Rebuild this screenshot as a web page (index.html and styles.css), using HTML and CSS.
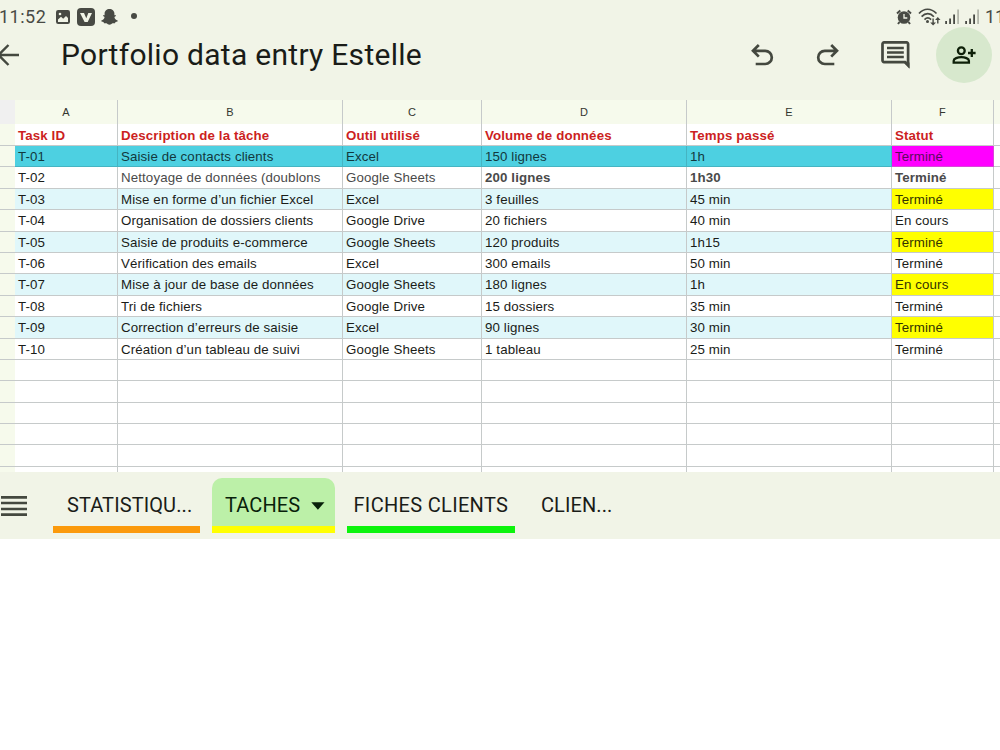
FILE: index.html
```
<!DOCTYPE html>
<html lang="fr">
<head>
    <title>Portfolio data entry Estelle</title>
    <meta charset="utf-8">
    <link rel="stylesheet" href="styles.css">
</head>
<body>
<div class="status">
    <span class="clock">11:52</span>
    <svg class="photo" width="14" height="14" viewBox="0 0 14 14"><rect width="14" height="14" rx="2.2" fill="#484a44"/><path d="M2 12V9.500l3-2.700 2.200 2L10 6l2 2v4z" fill="#f1f4e7"/><circle cx="4" cy="4" r="1.300" fill="#f1f4e7"/></svg>
    <svg class="vapp" width="18" height="18" viewBox="0 0 18 18"><rect width="18" height="18" rx="4" fill="#484a44"/><path d="M3 5h4l2.300 5.200L11.300 5H15l-4.300 9H7.600z" fill="#f1f4e7"/></svg>
    <svg class="ghost" width="17" height="16" viewBox="0 0 17 16"><path d="M8.500 0C5.800 0 3.600 1.800 3.600 4.500v1.700L2.400 6.100 2.100 7l1.500 1C3.300 9.800 2.200 11 .3 11.600L.5 12.500l2 .6.500 1.200 2.500-.1c1 .6 1.800 1.500 3 1.500s2-.9 3-1.500l2.500.1.500-1.200 2-.6.200-.9C14.800 11 13.700 9.800 13.400 8l1.500-1-.3-.9-1.200.1V4.500C13.400 1.800 11.200 0 8.500 0z" fill="#484a44"/></svg>
    <span class="dot"></span>
    <svg class="alarm" width="16" height="16" viewBox="0 0 16 16"><circle cx="8" cy="8.500" r="6.300" fill="#484a44"/><path d="M1 4.500 4.300 1.500M15 4.500 11.700 1.500M3.500 13l-1.500 2M12.500 13l1.500 2" stroke="#484a44" stroke-width="2"/><path d="M8 5v4h3.300" fill="none" stroke="#f1f4e7" stroke-width="1.300"/></svg>
    <svg class="wifi" width="23" height="18" viewBox="0 0 23 18"><g fill="none" stroke="#484a44" stroke-width="1.700"><path d="M1 5.500C6-.2 13-.2 18.500 5.500"/><path d="M3.600 8.700c3.700-4 8.700-4 12.300 0"/><path d="M6.500 11.600c2-2 4.600-2 6.600 0"/></g><circle cx="9.500" cy="13.600" r="1.500" fill="#484a44"/><path d="M14.400 10.500h1.400v4H18l-2.900 3-2.900-3h2.200zM19.100 15.500h1.400v-3.500h2L19.800 9l-2.700 3h2z" fill="#484a44"/></svg>
    <svg class="signal" width="14" height="15" viewBox="0 0 14 15"><path d="M.2 12h1.800v3H.2zM4.200 9.500H6V15H4.200zM8.200 5.500H10V15H8.200z" fill="#484a44"/><path d="M12.200.500H14V15h-1.800z" fill="#b4b7ac"/></svg>
    <svg class="signal signal-2" width="14" height="15" viewBox="0 0 14 15"><path d="M.2 12h1.800v3H.2zM4.200 9.500H6V15H4.200zM8.200 5.500H10V15H8.200z" fill="#484a44"/><path d="M12.200.500H14V15h-1.800z" fill="#b4b7ac"/></svg>
    <span class="battery">11</span>
</div>

<div class="appbar">
    <svg class="back" width="20" height="24" viewBox="0 0 20 24"><path d="M19 12H-1M8.500 2-1.500 12l10 10" fill="none" stroke="#44483f" stroke-width="2.400"/></svg>
    <h1>Portfolio data entry Estelle</h1>
    <svg class="undo" width="24" height="24" viewBox="0 0 24 24"><path d="M8.800 2 3 7.800l5.800 5.800M3 7.800h12.200a6.600 6.600 0 0 1 0 13.200H5.700" fill="none" stroke="#44483f" stroke-width="2.700"/></svg>
    <svg class="redo" width="24" height="24" viewBox="0 0 24 24"><path d="M15.200 2 21 7.800l-5.800 5.800M21 7.800H8.800a6.600 6.600 0 0 0 0 13.200h9.500" fill="none" stroke="#44483f" stroke-width="2.700"/></svg>
    <svg class="comment" width="29" height="28" viewBox="0 0 29 28"><path d="M3 1.400h22.600a1.500 1.500 0 0 1 1.500 1.500V24l-3-2.900H3a1.500 1.500 0 0 1-1.500-1.500V2.900A1.500 1.500 0 0 1 3 1.400z" fill="none" stroke="#44483f" stroke-width="2.700"/><path d="M22.500 21.500h6v6.200z" fill="#44483f"/><path d="M6 6.900h16.800M6 11.500h16.800M6 16.100h16.800" stroke="#44483f" stroke-width="2.500"/></svg>
    <div class="share">
        <svg width="24" height="18" viewBox="0 0 24 18"><g fill="none" stroke="#0e2009" stroke-width="2.300"><circle cx="9.300" cy="4.700" r="3.400"/><path d="M1.700 16.600v-1.800c0-2.200 4-3.600 7.600-3.600s7.600 1.400 7.600 3.600v1.800z"/><path d="M19.800 3v8M16 7h7.600"/></g></svg>
    </div>
</div>

<div class="sheet">
    <div class="row letters"><i></i><b>A</b><b>B</b><b>C</b><b>D</b><b>E</b><b>F</b><b></b></div>
    <div class="row head"><i></i><b>Task ID</b><b>Description de la tâche</b><b>Outil utilisé</b><b>Volume de données</b><b>Temps passé</b><b>Statut</b><b></b></div>
    <div class="row selected"><i></i><span>T-01</span><span>Saisie de contacts clients</span><span>Excel</span><span>150 lignes</span><span>1h</span><span class="pink">Terminé</span><span></span></div>
    <div class="row"><i></i><span>T-02</span><span class="grey">Nettoyage de données (doublons</span><span class="grey">Google Sheets</span><span class="grey strong">200 lignes</span><span class="grey strong">1h30</span><span class="grey strong">Terminé</span><span></span></div>
    <div class="row band"><i></i><span>T-03</span><span>Mise en forme d’un fichier Excel</span><span>Excel</span><span>3 feuilles</span><span>45 min</span><span class="yellow">Terminé</span><span></span></div>
    <div class="row"><i></i><span>T-04</span><span>Organisation de dossiers clients</span><span>Google Drive</span><span>20 fichiers</span><span>40 min</span><span>En cours</span><span></span></div>
    <div class="row band"><i></i><span>T-05</span><span>Saisie de produits e-commerce</span><span>Google Sheets</span><span>120 produits</span><span>1h15</span><span class="yellow">Terminé</span><span></span></div>
    <div class="row"><i></i><span>T-06</span><span>Vérification des emails</span><span>Excel</span><span>300 emails</span><span>50 min</span><span>Terminé</span><span></span></div>
    <div class="row band"><i></i><span>T-07</span><span>Mise à jour de base de données</span><span>Google Sheets</span><span>180 lignes</span><span>1h</span><span class="yellow">En cours</span><span></span></div>
    <div class="row"><i></i><span>T-08</span><span>Tri de fichiers</span><span>Google Drive</span><span>15 dossiers</span><span>35 min</span><span>Terminé</span><span></span></div>
    <div class="row band"><i></i><span>T-09</span><span>Correction d’erreurs de saisie</span><span>Excel</span><span>90 lignes</span><span>30 min</span><span class="yellow">Terminé</span><span></span></div>
    <div class="row"><i></i><span>T-10</span><span>Création d’un tableau de suivi</span><span>Google Sheets</span><span>1 tableau</span><span>25 min</span><span>Terminé</span><span></span></div>
    <div class="row"><i></i><span></span><span></span><span></span><span></span><span></span><span></span><span></span></div>
    <div class="row"><i></i><span></span><span></span><span></span><span></span><span></span><span></span><span></span></div>
    <div class="row"><i></i><span></span><span></span><span></span><span></span><span></span><span></span><span></span></div>
    <div class="row"><i></i><span></span><span></span><span></span><span></span><span></span><span></span><span></span></div>
    <div class="row"><i></i><span></span><span></span><span></span><span></span><span></span><span></span><span></span></div>
    <div class="row"><i></i><span></span><span></span><span></span><span></span><span></span><span></span><span></span></div>
</div>

<div class="tabs">
    <svg class="menu" width="26" height="20" viewBox="0 0 26 20"><path d="M0 1.400h26M0 7h26M0 13h26M0 18.600h26" stroke="#44483f" stroke-width="2.600"/></svg>
    <div class="tab orange"><span>STATISTIQU...</span></div>
    <div class="tab active"><span>TACHES</span><svg width="14" height="8" viewBox="0 0 14 8"><path d="M.3.300h13.200L6.900 7.700z" fill="#08210a"/></svg></div>
    <div class="tab green"><span>FICHES CLIENTS</span></div>
    <div class="tab"><span>CLIEN...</span></div>
</div>
</body>
</html>
```
FILE: styles.css
```
body {
    margin: 0;
    width: 1000px;
    overflow: hidden;
    background: #fff;
    color: #1a1c18;
    font-family: Roboto, sans-serif;
}

svg {
    flex: none;
}

.status {
    display: flex;
    align-items: flex-start;
    height: 26px;
    background: #f1f4e7;
    color: #484a44;
    font-size: 18px;
    line-height: 20px;
}

.clock {
    width: 56px;
    margin-top: 7px;
    margin-left: -1px;
    letter-spacing: 0.5px;
}

.photo {
    margin: 10px 7px 0 1px;
}

.vapp {
    margin: 8px 6px 0 0;
}

.ghost {
    margin: 9px 13px 0 0;
}

.dot {
    width: 6px;
    height: 6px;
    margin-top: 13px;
    border-radius: 50%;
    background: #484a44;
}

.alarm {
    margin: 9px 6px 0 auto;
}

.wifi {
    margin: 8px 4px 0 0;
}

.signal {
    margin: 9px 6px 0 0;
}

.battery {
    width: 15px;
    margin-top: 7px;
}

.appbar {
    display: flex;
    align-items: center;
    box-sizing: border-box;
    height: 74px;
    padding: 1px 8px 18px 0;
    background: #f1f4e7;
}

.appbar h1 {
    flex: 1;
    margin: 0 0 0 41px;
    font-size: 30px;
    font-weight: 400;
    line-height: 40px;
    letter-spacing: 0.28px;
    white-space: nowrap;
}

.undo {
    margin-right: 42px;
}

.redo {
    margin-right: 41px;
}

.comment {
    margin-right: 26px;
}

.share {
    display: flex;
    align-items: center;
    justify-content: center;
    width: 56px;
    height: 56px;
    border-radius: 50%;
    background: #d7e8cd;
}

.sheet {
    height: 372px;
    overflow: hidden;
    font-family: "Liberation Sans", Arial, sans-serif;
    font-size: 13.3px;
    letter-spacing: 0.12px;
}

.row {
    display: grid;
    grid-template-columns: 15px 103px 225px 139px 205px 205px 102px 6px;
    height: 21.4px;
}

.row > * {
    box-sizing: border-box;
    padding-left: 3px;
    border-right: 1px solid #c6caca;
    border-bottom: 1px solid #c6caca;
    line-height: 21.4px;
    white-space: nowrap;
    overflow: hidden;
}

.row > i {
    border-right: none;
    background: #f6faec;
}

.row > :last-child {
    border-right: none;
}

.letters {
    height: 24.2px;
    background: #f6faec;
}

.letters > * {
    padding: 0;
    border-bottom: none;
    font-size: 11px;
    font-weight: 400;
    line-height: 24px;
    text-align: center;
    color: #33362f;
}

.letters > i {
    background: #f0f0f0;
}

.head {
    height: 21.8px;
    color: #cc1f22;
}

.head > * {
    line-height: 23px;
}

.selected span {
    background: #4dd0e1;
    border-color: #45b4c2;
    color: #12383d;
}

.band span {
    background: #e0f7fa;
}

.row span:last-child {
    background: #fff;
    border-color: #c6caca;
}

.row .pink {
    background: #ff00ff;
    border-color: #d946d9;
    color: #5c0a5c;
}

.row .yellow {
    background: #ffff00;
    color: #333300;
}

.grey {
    color: #4a4a4a;
}

.strong {
    font-weight: bold;
}

.tabs {
    display: flex;
    align-items: flex-start;
    box-sizing: border-box;
    height: 67px;
    padding: 6px 0 0 1px;
    background: #f1f4e7;
    font-size: 20px;
}

.menu {
    margin: 18px 26px 0 0;
}

.tab {
    display: flex;
    align-items: center;
    box-sizing: border-box;
    height: 55px;
    margin-right: 12px;
    padding: 0 7px 0 7px;
    border-bottom: 7px solid transparent;
    white-space: nowrap;
    line-height: 24px;
    letter-spacing: 0.1px;
}

.tab span {
    padding-top: 5px;
}

.orange {
    width: 147px;
    padding-left: 14px;
    border-color: #fb9a0c;
}

.active {
    width: 122.5px;
    padding-left: 13px;
    border-color: #ffff00;
    border-radius: 10px 10px 0 0;
    background: #bcf0a8;
    background-clip: padding-box;
    color: #08210a;
}

.active svg {
    margin: 7px 3px 0 auto;
}

.green {
    width: 168.5px;
    border-color: #0cf40c;
    letter-spacing: 0.32px;
}

.tab:last-child {
    padding-left: 14px;
}
```
